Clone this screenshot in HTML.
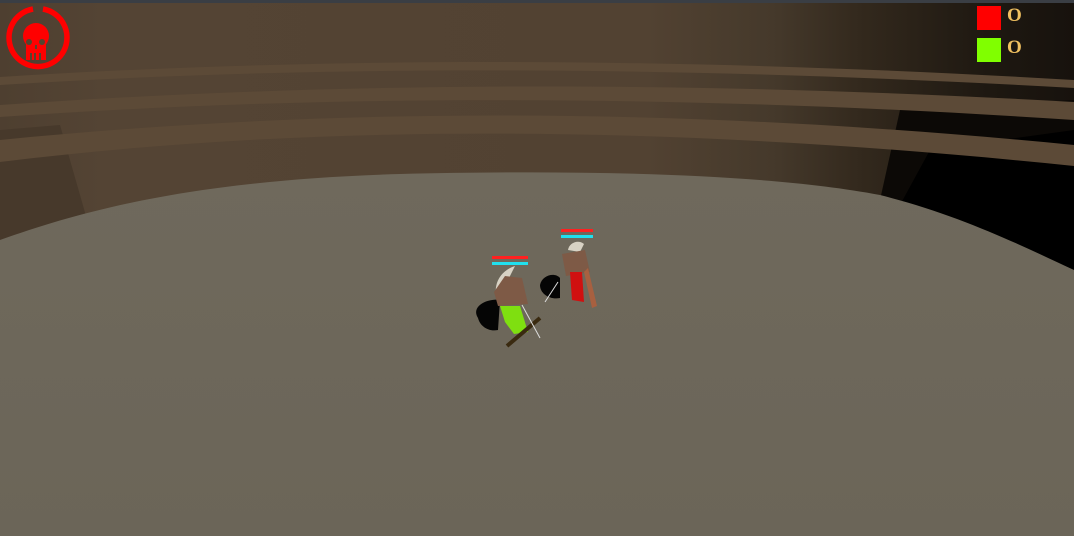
<!DOCTYPE html>
<html><head><style>
html,body{margin:0;padding:0;width:1074px;height:536px;overflow:hidden;background:#000;font-family:"Liberation Serif",serif}
.s{position:absolute}
</style></head><body>
<svg class="s" style="left:0;top:0" width="1074" height="536" viewBox="0 0 1074 536">
<defs>
<linearGradient id="w" x1="0" x2="1" y1="0" y2="0">
<stop offset="0" stop-color="#4e3f30"/><stop offset="0.1" stop-color="#544434"/><stop offset="0.6" stop-color="#524232"/><stop offset="0.72" stop-color="#45392b"/><stop offset="0.8" stop-color="#33291d"/><stop offset="0.92" stop-color="#1e1811"/><stop offset="1" stop-color="#17120d"/>
</linearGradient>
<linearGradient id="f" x1="0" x2="0" y1="0" y2="1">
<stop offset="0" stop-color="#6f695c"/><stop offset="1" stop-color="#6b6558"/>
</linearGradient>
</defs>
<rect width="1074" height="536" fill="url(#w)"/>
<rect x="0" y="0" width="1074" height="3" fill="#3a3e44"/>
<polygon points="0,130 60,125 90,230 0,245" fill="#47392b"/>
<polygon points="900,110 1074,100 1074,270 880,200" fill="#0c0906"/>
<polygon points="930,150 1074,130 1074,270 900,205" fill="#000"/>
<!-- rails -->
<path d="M0,77 C300,58 650,55 1074,80 L1074,88 C650,64 300,66 0,85 Z" fill="#5c4a37"/>
<path d="M0,105 C300,84 650,78 1074,102 L1074,120 C650,92 300,96 0,117 Z" fill="#5c4a37"/>
<path d="M0,140 C300,110 650,103 1074,145 L1074,166 C650,122 300,125 0,162 Z" fill="#5c4a37"/>
<!-- floor -->
<path d="M0,240 C90,208 200,180 400,174 C560,170 760,172 880,195 C960,215 1020,245 1074,270 L1074,536 L0,536 Z" fill="url(#f)"/>
<!-- green char -->
<path d="M478,318 C470,305 490,298 500,300 L498,330 C488,332 480,326 478,318Z" fill="#050505"/>
<rect x="492" y="256" width="36" height="3" fill="#ff2020"/>
<rect x="492" y="262" width="36" height="3" fill="#20e0ee"/>
<path d="M496,296 C494,280 503,270 515,266 L510,276 L502,296Z" fill="#d8d2c4"/>
<path d="M494,292 L505,276 L522,278 L528,304 L498,306Z" fill="#7e5a46"/>
<path d="M500,306 L520,306 L528,332 L514,334 L505,322Z" fill="#7fdf10"/>
<path d="M507,346 L540,318" stroke="#3a2a10" stroke-width="4"/>
<path d="M522,305 L540,338" stroke="#ddd" stroke-width="1"/>
<!-- red char -->
<path d="M540,285 C542,275 555,272 560,278 L560,298 C550,300 540,294 540,285Z" fill="#050505"/>
<rect x="561" y="229" width="32" height="3" fill="#ff2020"/>
<rect x="561" y="235" width="32" height="3" fill="#20e0ee"/>
<path d="M568,250 C569,243 578,239 584,244 L580,252Z" fill="#d8d2c4"/>
<path d="M562,254 L585,250 L590,272 L566,276Z" fill="#7e5a46"/>
<path d="M570,272 L582,272 L584,302 L572,300Z" fill="#d01010"/>
<path d="M588,268 L597,306 L592,308 L584,272Z" fill="#a86040"/>
<path d="M558,282 L545,302" stroke="#ddd" stroke-width="1"/>
</svg>
<!-- skull icon -->
<svg class="s" style="left:-2px;top:-1px" width="80" height="80" viewBox="0 0 80 80">
<path d="M35,10 A29,29 0 1 0 45,10" fill="none" stroke="#ff0000" stroke-width="5.5"/>
<circle cx="38" cy="37" r="13" fill="#f00"/>
<rect x="28" y="40" width="20" height="12" fill="#f00"/>
<circle cx="31" cy="43" r="3" fill="#54442f"/><circle cx="44" cy="43" r="3" fill="#54442f"/>
<rect x="37" y="46" width="2" height="4" fill="#54442f"/>
<rect x="28" y="52" width="20" height="9" fill="#f00"/>
<rect x="32" y="54" width="2" height="7" fill="#54442f"/><rect x="36" y="54" width="2" height="7" fill="#54442f"/><rect x="41" y="54" width="2" height="7" fill="#54442f"/>
</svg>
<!-- score -->
<div class="s" style="left:977px;top:6px;width:24px;height:24px;background:#ff0000"></div>
<div class="s" style="left:977px;top:38px;width:24px;height:24px;background:#80ff00"></div>
<div class="s" style="left:1007px;top:5px;color:#f0c060;font-size:19px;font-weight:bold">O</div>
<div class="s" style="left:1007px;top:37px;color:#f0c060;font-size:19px;font-weight:bold">O</div>
</body></html>
